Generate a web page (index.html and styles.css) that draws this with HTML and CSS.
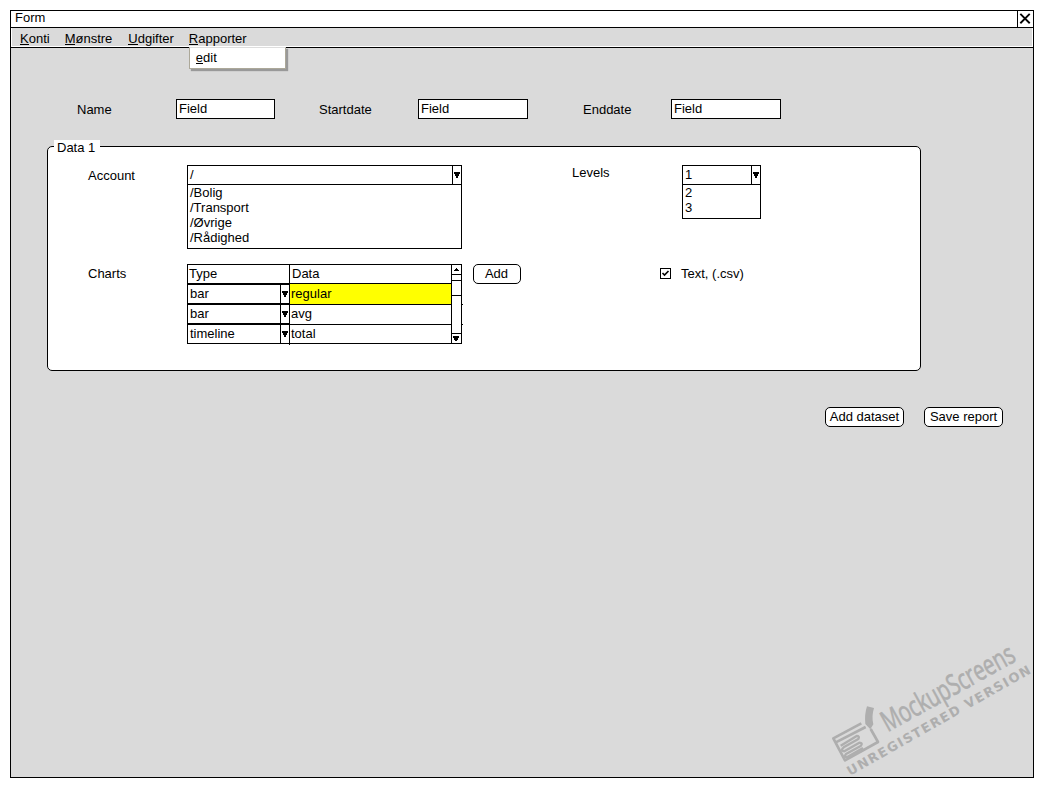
FILE: index.html
```html
<!DOCTYPE html>
<html lang="da">
<head>
<meta charset="utf-8">
<title>Form</title>
<link rel="stylesheet" href="styles.css">
</head>
<body>
<div class="window">
  <header class="titlebar">
    <span>Form</span>
    <svg class="close" width="16" height="16" viewBox="0 0 16 16"><path d="M2.5 2.5L12.5 12.5M12.5 2.5L2.5 12.5"/></svg>
  </header>
  <nav class="menubar">
    <span><u>K</u>onti</span>
    <span><u>M</u>ønstre</span>
    <span class="expenses"><u>U</u>dgifter</span>
    <span class="has-menu"><u>R</u>apporter<span class="menu"><u>e</u>dit</span></span>
  </nav>
  <main>
    <div class="fields">
      <label class="name">Name</label><div class="input short">Field</div>
      <label class="start">Startdate</label><div class="input">Field</div>
      <label class="end">Enddate</label><div class="input">Field</div>
    </div>
    <section class="panel">
      <span class="legend">Data 1</span>
      <div class="row accounts">
        <label class="caption account">Account</label>
        <div class="combo wide">
          <div class="combo-head"><span>/</span><i class="drop"><svg width="6" height="6"><path d="M0 0H6V2H5V4H4V6H2V4H1V2H0Z"/></svg></i></div>
          <ul><li>/Bolig</li><li>/Transport</li><li>/Øvrige</li><li>/Rådighed</li></ul>
        </div>
        <label class="levels">Levels</label>
        <div class="combo small">
          <div class="combo-head"><span>1</span><i class="drop"><svg width="6" height="6"><path d="M0 0H6V2H5V4H4V6H2V4H1V2H0Z"/></svg></i></div>
          <ul><li>2</li><li>3</li></ul>
        </div>
      </div>
      <div class="row charts">
        <label class="caption">Charts</label>
        <div class="table">
          <div class="types">
            <div class="type-title">Type</div>
            <div class="type"><span>bar</span><i class="drop"><svg width="6" height="6"><path d="M0 0H6V2H5V4H4V6H2V4H1V2H0Z"/></svg></i></div>
            <div class="type"><span>bar</span><i class="drop"><svg width="6" height="6"><path d="M0 0H6V2H5V4H4V6H2V4H1V2H0Z"/></svg></i></div>
            <div class="type last"><span>timeline</span><i class="drop"><svg width="6" height="6"><path d="M0 0H6V2H5V4H4V6H2V4H1V2H0Z"/></svg></i></div>
          </div>
          <div class="data">
            <div class="data-title">Data</div>
            <div class="cell selected">regular</div>
            <div class="cell">avg</div>
            <div class="cell last">total</div>
          </div>
          <svg class="scroll" width="12" height="80" viewBox="0 0 12 80" shape-rendering="crispEdges">
            <path d="M0 0H1V80H0ZM10 0H11V80H10ZM0 0H11V1H0ZM0 10H11V11H0ZM0 16H11V17H0ZM0 31H11V32H0ZM0 69H11V70H0ZM0 79H11V80H0ZM11 40H12V41H11ZM11 60H12V61H11Z"/>
            <path d="M5 4H6V5H7V6H8V7H3V6H4V5H5ZM2 72H8V74H7V76H6V77H4V76H3V74H2Z"/>
          </svg>
        </div>
        <button class="button add">Add</button>
        <svg class="check" width="11" height="11" viewBox="0 0 11 11"><rect x=".5" y=".5" width="10" height="10"/><path d="M2.5 5L4.5 7L8.5 3"/></svg>
        <label class="csv">Text, (.csv)</label>
      </div>
    </section>
    <div class="actions"><button class="button">Add dataset</button><button class="button">Save report</button></div>
  </main>
  <svg class="watermark" width="224" height="158" viewBox="0 0 672 474">
    <g class="logo">
      <path d="M124 280L40 325L75 391L174 336L152 297"/>
      <path d="M46 338L137 291"/>
      <path class="lines" d="M62 347L110 318Q120 318 115 327L71 352Q60 362 73 364L118 338Q130 338 122 348L78 372Q70 382 82 381L129 354"/>
      <path class="pen" d="M141 229L162 234Q154 260 160 283L151 298L136 282Q133 253 141 229Z"/>
    </g>
    <text class="brand" transform="translate(203 307) rotate(-29)" textLength="445" lengthAdjust="spacingAndGlyphs">MockupScreens</text>
    <text class="notice" transform="translate(90 438) rotate(-29.6)" textLength="627" lengthAdjust="spacing">UNREGISTERED VERSION</text>
  </svg>
</div>
</body>
</html>
```
FILE: styles.css
```css
* { box-sizing: border-box; }
body { margin: 0; padding: 10px; background: #fff; color: #000; font: 13px/15px "Liberation Sans", Arial, sans-serif; }
.window { position: relative; width: 1024px; height: 768px; border: 1px solid #000; background: #dadada; }
.titlebar { display: flex; justify-content: space-between; height: 17px; padding-left: 4px; background: #fff; border-bottom: 1px solid #000; line-height: 14px; }
.close { border-left: 1px solid #000; fill: none; stroke: #000; stroke-width: 2; }
.menubar { display: flex; gap: 15px; height: 19px; padding: 3px 0 0 8px; border: solid #fff; border-width: 0 1px 1px; box-shadow: 0 1px #000; }
.expenses { margin-left: 1px; }
.has-menu { position: relative; }
u { text-decoration: none; box-shadow: inset 0 -1px #000; display: inline-block; height: 14px; }
.menu { position: absolute; left: 0; top: 16px; width: 97px; height: 22px; padding: 2px 6px; background: #fff; border: 1px solid #aca899; border-top-color: #ddd; box-shadow: 2px 2px 1px #999; }
main { display: flex; flex-direction: column; padding: 52px 30px 0 36px; }
.fields { display: flex; height: 20px; line-height: 22px; }
.name { width: 129px; padding-left: 30px; }
.start { width: 143px; padding-left: 44px; }
.end { width: 143px; padding-left: 55px; }
.input { width: 110px; height: 20px; padding-left: 2px; border: 1px solid #000; background: #fff; line-height: 18px; }
.short { width: 99px; }
.panel { position: relative; width: 874px; height: 225px; margin-top: 27px; padding: 18px 0 0 40px; border: 1px solid #000; border-radius: 5px; background: #fff; }
.legend { position: absolute; left: 6px; top: -7px; width: 46px; height: 15px; padding-left: 3px; background: #fff; }
.row { display: flex; align-items: flex-start; }
.accounts { height: 99px; }
.caption { width: 99px; padding-top: 2px; }
.account { padding-top: 3px; }
.combo { border: 1px solid #000; }
.wide { width: 275px; height: 84px; }
.small { width: 79px; height: 54px; }
.combo-head { display: flex; justify-content: space-between; height: 19px; padding-left: 2px; border-bottom: 1px solid #000; line-height: 18px; }
.drop { display: flex; align-items: center; justify-content: center; width: 9px; border-left: 1px solid #000; }
.drop svg { shape-rendering: crispEdges; flex: none; }
ul { list-style: none; margin: 0; padding: 0 0 0 2px; }
.levels { width: 110px; margin-left: 110px; }
.table { display: flex; height: 80px; }
.types { width: 102px; border-left: 1px solid #000; border-top: 1px solid #000; }
.type-title { height: 20px; padding-left: 1px; border-bottom: 2px solid #000; line-height: 18px; }
.type { display: flex; justify-content: space-between; height: 20px; padding-left: 2px; border-bottom: 2px solid #000; line-height: 18px; }
.type.last, .cell.last { height: 19px; border-bottom-width: 1px; }
.data { width: 162px; height: 81px; border-left: 1px solid #000; border-top: 1px solid #000; }
.data-title { height: 19px; padding-left: 2px; border-bottom: 1px solid #000; line-height: 18px; }
.cell { height: 20px; padding-left: 1px; border-bottom: 1px solid #000; line-height: 20px; }
.selected { height: 21px; background: #ff0; }
.cell:not(.selected) { line-height: 18px; }
.button { height: 20px; padding: 0; border: 1px solid #000; border-radius: 5px; background: #fff; color: #000; font: inherit; line-height: 18px; text-align: center; width: 79px; }
.add { width: 48px; margin-left: 10px; padding-right: 1px; }
.check { margin: 4px 10px 0 139px; fill: none; stroke: #000; }
.check path { stroke-width: 1.6; }
.csv { padding-top: 2px; }
.actions { display: flex; justify-content: flex-end; gap: 20px; margin-top: 36px; }
.watermark { position: absolute; left: 809px; top: 619px; overflow: visible; fill: #aeaeae; }
.logo { fill: none; stroke: #aeaeae; stroke-width: 8; stroke-linejoin: round; }
.logo .lines { stroke-width: 7; }
.logo .pen { fill: #aeaeae; stroke: none; }
.brand { font: 86px "Open Sans", sans-serif; stroke: #aeaeae; stroke-width: 2; }
.notice { font: bold 39px "DejaVu Sans", sans-serif; }
```
